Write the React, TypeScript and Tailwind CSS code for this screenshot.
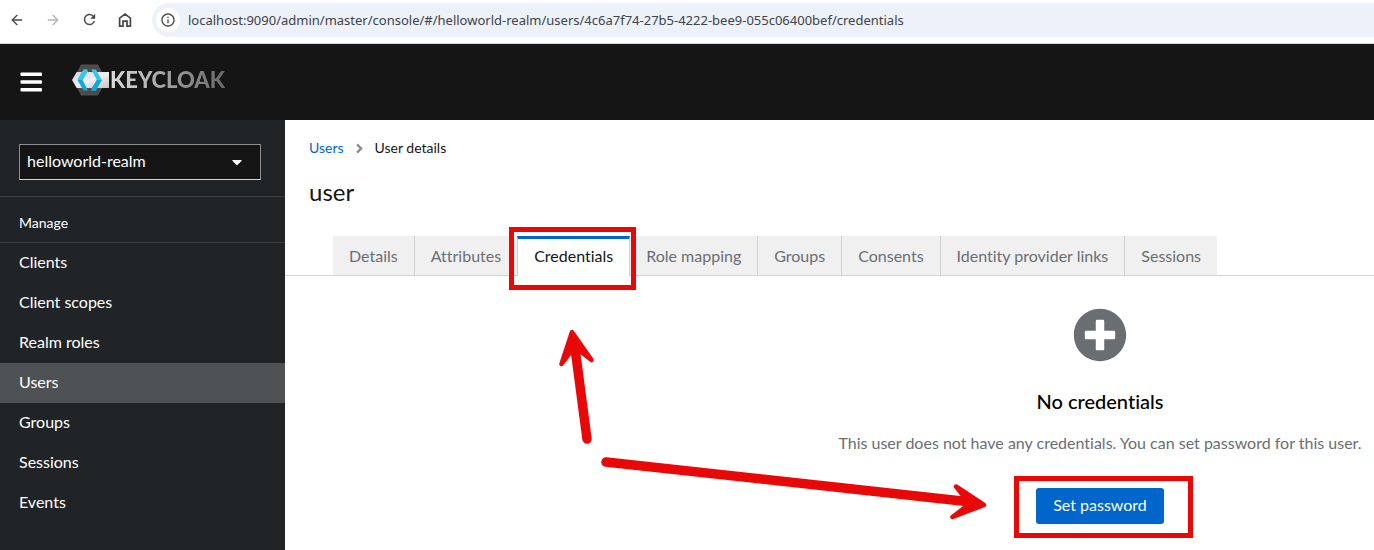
import { ArrowLeft, ArrowRight } from 'lucide-react';
import { FaAngleRight, FaCaretDown, FaPlusCircle } from 'react-icons/fa';
import { MdRefresh, MdInfoOutline } from 'react-icons/md';

const navItems = ['Clients', 'Client scopes', 'Realm roles', 'Users', 'Groups', 'Sessions', 'Events'];

const tabs = [
  'Details',
  'Attributes',
  'Credentials',
  'Role mapping',
  'Groups',
  'Consents',
  'Identity provider links',
  'Sessions',
];

function HomeIcon() {
  return (
    <svg width="14" height="16" viewBox="0 0 14 16" fill="none" stroke="currentColor" strokeWidth="1.7">
      <path d="M1.6 6.2 7 2l5.4 4.2v7.9H9V9.2H5v4.9H1.6z" />
    </svg>
  );
}

function BrowserBar() {
  return (
    <div className="flex h-11 shrink-0 items-center border-b border-[#d5d9de] bg-white pb-1 text-[#474747]">
      <div className="flex w-[152px] shrink-0 items-center gap-5 pl-[9px]">
        <button aria-label="Back"><ArrowLeft size={16} strokeWidth={2} /></button>
        <button aria-label="Forward" className="text-[#b4b4b4]"><ArrowRight size={16} strokeWidth={2} /></button>
        <button aria-label="Reload"><MdRefresh size={17} /></button>
        <button aria-label="Home"><HomeIcon /></button>
      </div>
      <div className="flex h-[34px] grow items-center gap-2 rounded-l-full bg-[#ecf1fa] pl-1">
        <button aria-label="Site information" className="flex size-6 shrink-0 items-center justify-center rounded-full bg-white">
          <MdInfoOutline size={16} />
        </button>
        <input
          aria-label="Address"
          readOnly
          value="localhost:9090/admin/master/console/#/helloworld-realm/users/4c6a7f74-27b5-4222-bee9-055c06400bef/credentials"
          className="min-w-0 grow bg-transparent font-['Noto_Sans',sans-serif] text-[13px] leading-5 text-[#404347] outline-none"
        />
      </div>
    </div>
  );
}

function Logo() {
  return (
    <a href="#home" aria-label="Keycloak" className="flex items-center pb-1">
      <svg width="38" height="32" viewBox="0 0 38 32">
        <defs>
          <linearGradient id="bar" x1="0" x2="1" y1="0" y2="1">
            <stop offset="0" stopColor="#d2d2d2" />
            <stop offset="0.5" stopColor="#efefef" />
            <stop offset="1" stopColor="#c4c4c4" />
          </linearGradient>
        </defs>
        <path d="M9 0.500h17L34.500 16 26 31.500H9L.8 16z" fill="#4c4c4c" />
        <path d="M4.700 8H37v16H4.700L0 16z" fill="url(#bar)" />
        <path d="M11.500 5.500h4.500L10.500 16l5.500 10.500h-4.500L5.500 16z" fill="#12a8d6" />
        <path d="M11.500 5.500h3l1.500 1.800L10.500 16h-5z" fill="#35c6ee" />
        <path d="M19.300 5.500h4.500L29.800 16l-6 10.500h-4.500L24.800 16z" fill="#35c6ee" />
        <path d="M24.800 16h5l-6 10.500h-3l-1.500-1.800z" fill="#12a8d6" />
      </svg>
      <span className="bg-linear-to-r from-[#dedede] to-[#686868] bg-clip-text text-[22px] leading-8 font-black text-transparent">
        KEYCLOAK
      </span>
    </a>
  );
}

function Header() {
  return (
    <header className="flex h-[76px] shrink-0 items-center gap-[29px] bg-[#151515] pl-5">
      <button aria-label="Global navigation" className="text-white">
        <svg width="23" height="20" viewBox="0 0 23 20" fill="currentColor">
          <rect x="0.500" y="0.500" width="21.500" height="3.500" rx="0.800" />
          <rect x="0.500" y="8.200" width="21.500" height="3.500" rx="0.800" />
          <rect x="0.500" y="16" width="21.500" height="3.500" rx="0.800" />
        </svg>
      </button>
      <Logo />
    </header>
  );
}

function Sidebar() {
  return (
    <aside className="w-[285px] shrink-0 bg-[#212427] text-white">
      <div className="border-b border-[#3c3f42] pt-6 pb-4 pl-[19px]">
        <div className="grid w-[242px] items-center">
          <select
            aria-label="Realm"
            className="col-start-1 row-start-1 h-9 appearance-none border border-[#8a8d90] border-b-[#d2d2d2] bg-[#151515] px-[7px] pb-0.5 text-base"
          >
            <option>helloworld-realm</option>
          </select>
          <FaCaretDown size={16} className="pointer-events-none col-start-1 row-start-1 mr-4 justify-self-end" />
        </div>
      </div>
      <nav aria-label="Manage">
        <h2 className="border-b border-[#3c3f42] pt-[15px] pb-[9px] pl-[19px] text-sm leading-[21px]">Manage</h2>
        <ul>
          {navItems.map((item) => (
            <li key={item}>
              <a
                href={`#${item}`}
                className={`block pt-[7px] pb-[9px] pl-[19px] leading-6 ${item === 'Users' ? 'bg-[#4f5255]' : ''}`}
              >
                {item}
              </a>
            </li>
          ))}
        </ul>
      </nav>
    </aside>
  );
}

function Tabs() {
  return (
    <ul role="tablist" className="flex border-b border-[#d2d2d2] pl-12">
      {tabs.map((tab, i) =>
        tab === 'Credentials' ? (
          <li key={tab} role="presentation" className="relative -mb-px">
            <button
              role="tab"
              aria-selected="true"
              className="h-10 border-x border-t-3 border-x-[#d2d2d2] border-t-[#0066cc] bg-white px-4 pb-1 text-[#151515]"
            >
              {tab}
            </button>
            <span className="pointer-events-none absolute -top-[9px] -right-1.5 -left-2 z-10 h-[63px] border-5 border-[#e90808]" />
          </li>
        ) : (
          <li key={tab} role="presentation">
            <button
              role="tab"
              aria-selected="false"
              className={`h-[39px] bg-[#f0f0f0] px-4 text-[#6a6e73] ${
                i === 1 || i === tabs.length - 1 ? '' : 'border-r border-[#d2d2d2]'
              }`}
            >
              {tab}
            </button>
          </li>
        ),
      )}
    </ul>
  );
}

function Arrows() {
  return (
    <svg
      className="pointer-events-none absolute top-[200px] left-[265px]"
      width="450"
      height="200"
      viewBox="0 0 450 200"
      fill="#e90808"
      stroke="#e90808"
      strokeLinecap="round"
      strokeLinejoin="round"
      aria-hidden="true"
    >
      <path d="M37 119 25 28" strokeWidth="9.500" />
      <path d="M22 12 11.500 44 21.500 31 30 31 41.500 40z" strokeWidth="4.500" />
      <path d="M56 142 421 182" strokeWidth="9.500" />
      <path d="M434 185 406 166.500 416 179 415.500 187 402.500 197z" strokeWidth="4.500" />
    </svg>
  );
}

function EmptyState() {
  return (
    <div className="flex w-[548px] flex-col items-center self-end pt-8">
      <FaPlusCircle size={54} className="text-[#6a6e73]" />
      <h2 className="mt-6 text-[20px] leading-[30px] font-medium text-black">No credentials</h2>
      <p className="mt-[15px] mb-[33px] leading-6 text-[#6a6e73]">
        This user does not have any credentials. You can set password for this user.
      </p>
      <div className="relative">
        <button className="h-9 w-32 rounded-[3px] bg-[#0066cc] pb-0.5 text-white">Set password</button>
        <span className="pointer-events-none absolute -top-3 -right-[29px] -left-[22px] h-[62px] border-5 border-[#e90808]" />
      </div>
    </div>
  );
}

export default function App() {
  return (
    <div className="flex min-h-screen flex-col bg-white font-['Lato',sans-serif] text-base [font-variant-ligatures:none]">
      <BrowserBar />
      <Header />
      <div className="flex grow">
        <Sidebar />
        <main className="relative flex min-w-0 grow flex-col overflow-hidden">
          <nav aria-label="Breadcrumb" className="pt-[18px] pl-6">
            <ol className="flex items-center text-sm leading-5">
              <li><a href="#users" className="text-[#0066cc]">Users</a></li>
              <li aria-hidden="true" className="px-2 text-[#8a8d90]"><FaAngleRight size={15} /></li>
              <li className="text-[#151515]">User details</li>
            </ol>
          </nav>
          <h1 className="mt-[18px] mb-7 pl-6 text-2xl leading-8 text-[#151515]">user</h1>
          <Tabs />
          <EmptyState />
          <Arrows />
        </main>
      </div>
    </div>
  );
}
